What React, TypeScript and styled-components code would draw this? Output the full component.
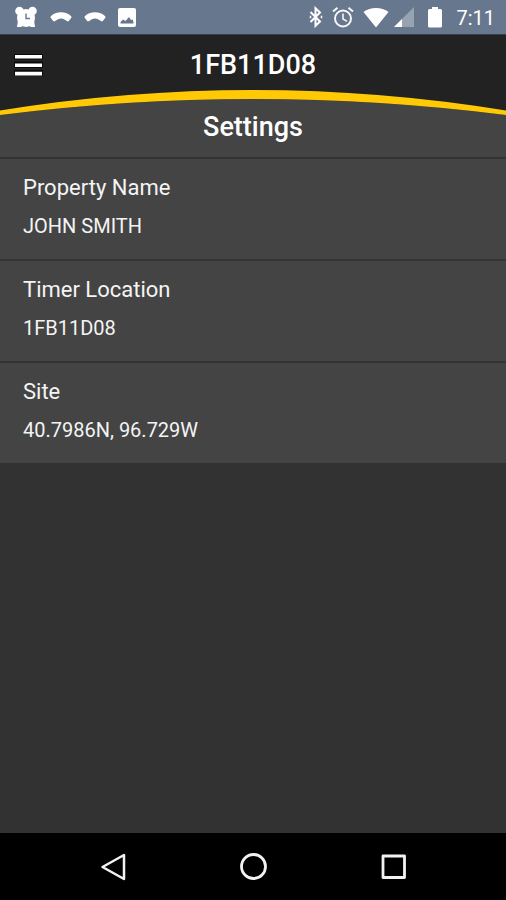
import React from "react";
import styled, { createGlobalStyle } from "styled-components";

const GlobalStyle = createGlobalStyle`
  * { box-sizing: border-box; }
  html, body { margin: 0; background: #323232; }
  body { font-family: Roboto, "Noto Sans", sans-serif; color: #fff; }
`;

const Screen = styled.div`
  display: flex;
  flex-direction: column;
  min-height: 100vh;
  background: #323232;
`;

const StatusBar = styled.div`
  display: flex;
  justify-content: space-between;
  align-items: center;
  height: 35px;
  padding: 0 11px 0 14px;
  background: #67778e;
  border-bottom: 1px solid #37404c;
`;

const StatusGroup = styled.div<{ $gap: number }>`
  display: flex;
  align-items: center;
  gap: ${(p) => p.$gap}px;
`;

const Clock = styled.time`
  padding-top: 2px;
  font-size: 20px;
  line-height: 24px;
  font-weight: 400;
  color: #fff;
`;

const Icon = styled.svg`
  display: block;
  flex: none;
`;

const Header = styled.header`
  background: #222;
`;

const TopBar = styled.div`
  display: grid;
  grid-template-columns: 56px 1fr 56px;
  align-items: center;
  height: 55px;
  padding-bottom: 2px;
`;

const MenuButton = styled.button`
  display: flex;
  align-items: center;
  height: 48px;
  padding: 6px 0 0 14px;
  border: 0;
  background: none;
  color: #fff;
`;

const TimerName = styled.h1`
  margin: 0;
  padding-top: 6px;
  font-size: 27px;
  line-height: 32px;
  font-weight: 500;
  text-align: center;
`;

const Arc = styled.svg`
  display: block;
  width: 100%;
  height: 26px;
`;

const SectionTitle = styled.h2`
  margin: 0;
  padding-bottom: 19px;
  background: #444;
  font-size: 27px;
  line-height: 22px;
  font-weight: 500;
  text-align: center;
`;

const SettingsList = styled.dl`
  margin: 0;
`;

const SettingRow = styled.div`
  padding: 15px 23px 20px;
  background: #444;
  border-top: 2px solid #333;
`;

const Label = styled.dt`
  font-size: 22px;
  line-height: 27px;
  color: #f4f4f4;
`;

const Value = styled.dd`
  margin: 12px 0 0;
  font-size: 20px;
  line-height: 26px;
  color: #f4f4f4;
`;

const NavBar = styled.nav`
  display: flex;
  justify-content: center;
  align-items: center;
  gap: 100px;
  height: 67px;
  margin-top: auto;
  background: #000;
`;

const NavButton = styled.button`
  display: flex;
  justify-content: center;
  align-items: center;
  width: 40px;
  height: 40px;
  padding: 0;
  border: 0;
  background: none;
  color: #f2f2f2;
`;

const settings = [
  { label: "Property Name", value: "JOHN SMITH" },
  { label: "Timer Location", value: "1FB11D08" },
  { label: "Site", value: "40.7986N, 96.729W" },
];

const AlarmFilled = () => (
  <Icon width="24" height="22" viewBox="0 0 24 22" fill="#fff" aria-hidden="true">
    <circle cx="5.500" cy="5" r="4.300" />
    <circle cx="18.500" cy="5" r="4.300" />
    <circle cx="12" cy="12" r="9" />
    <path d="M4 14L3 21h4l3-2zM20 14l1 7h-4l-3-2z" />
    <path d="M12 7.500v5h4" fill="none" stroke="#67778e" strokeWidth="1.400" />
  </Icon>
);

const MissedCall = () => (
  <Icon width="22" height="12" viewBox="0 0 22 12" fill="#fff" aria-hidden="true">
    <path d="M11 1.200C7 1.200 3.200 2.800.800 5.200Q.200 6 .700 6.700L3.200 10Q3.800 10.700 4.700 10.300L8 8.200Q11 6.900 14 8.200L17.300 10.300Q18.200 10.700 18.800 10L21.300 6.700Q21.800 6 21.200 5.200C18.800 2.800 15 1.200 11 1.200Z" />
  </Icon>
);

const Picture = () => (
  <Icon width="18" height="20" viewBox="0 0 18 20" aria-hidden="true">
    <rect width="18" height="19" y="1" rx="2" fill="#fff" />
    <path d="M2.500 16.500v-1.500l2.500-2.500 2.500 1.500 3.500-4 2 3 1.500-.500 1 2.500v1.500z" fill="#67778e" />
  </Icon>
);

const Bluetooth = () => (
  <Icon width="14" height="22" viewBox="0 0 14 22" fill="none" stroke="#fff" strokeWidth="2" aria-hidden="true">
    <path d="M1.500 6l9.500 9.500-4.500 4.300V2.200L11 6.500 1.500 16" />
    <path d="M12.500 9.800v2.400M1.500 9.800v2.400" strokeWidth="1.500" />
  </Icon>
);

const AlarmOutline = () => (
  <Icon width="22" height="22" viewBox="0 0 22 22" fill="none" stroke="#f4f6f8" strokeWidth="2" aria-hidden="true">
    <circle cx="11" cy="12.500" r="8" />
    <path d="M1 5.500L5.500 1.700M21 5.500l-4.500-3.800" />
    <path d="M11 7.500v5.500l4 2.400" strokeWidth="1.600" />
  </Icon>
);

const Wifi = () => (
  <Icon width="26" height="21" viewBox="0 0 26 21" fill="#fff" aria-hidden="true">
    <path d="M13 20.500L.500 5C4 2.300 8.300 1 13 1s9 1.300 12.500 4z" />
  </Icon>
);

const Signal = () => (
  <Icon width="20" height="20" viewBox="0 0 20 20" aria-hidden="true">
    <path d="M0 20L20 0v20z" fill="#98a3b2" />
    <path d="M0 20l8-8v8z" fill="#fff" />
  </Icon>
);

const Battery = () => (
  <Icon width="14" height="22" viewBox="0 0 14 22" fill="#fff" aria-hidden="true">
    <path d="M4 1h6v2H12.500q1.500 0 1.500 1.500v15.500q0 1.500-1.500 1.500H1.500q-1.500 0-1.500-1.500V4.500q0-1.500 1.500-1.500h2.500z" />
  </Icon>
);

export default function App() {
  return (
    <>
      <GlobalStyle />
      <Screen>
        <StatusBar>
          <StatusGroup $gap={12}>
            <AlarmFilled />
            <MissedCall />
            <MissedCall />
            <Picture />
          </StatusGroup>
          <StatusGroup $gap={14}>
            <StatusGroup $gap={9}>
              <Bluetooth />
              <AlarmOutline />
              <StatusGroup $gap={5}>
                <Wifi />
                <Signal />
              </StatusGroup>
            </StatusGroup>
            <Battery />
            <Clock>7:11</Clock>
          </StatusGroup>
        </StatusBar>
        <Header>
          <TopBar>
            <MenuButton type="button" aria-label="Open menu">
              <Icon width="30" height="24" viewBox="0 0 30 24" aria-hidden="true">
                <path d="M0 1h29v22H0z" fill="#0a0a0a" />
                <path d="M0 6.500h29v2H0zM0 15h29v2H0z" fill="#222" />
                <path d="M1 2h27v3.600H1zM1 10.400h27v3.600H1zM1 18.800h27v3.600H1z" fill="#fff" />
              </Icon>
            </MenuButton>
            <TimerName>1FB11D08</TimerName>
          </TopBar>
          <Arc viewBox="0 0 506 26" preserveAspectRatio="none" aria-hidden="true">
            <path d="M0 25Q253-7 506 25V26H0Z" fill="#444" />
            <path d="M0 20.500Q253-20.500 506 20.500V25Q253-7 0 25Z" fill="#ffca05" />
          </Arc>
        </Header>
        <main>
          <SectionTitle>Settings</SectionTitle>
          <SettingsList>
            {settings.map((s) => (
              <SettingRow key={s.label}>
                <Label>{s.label}</Label>
                <Value>{s.value}</Value>
              </SettingRow>
            ))}
          </SettingsList>
        </main>
        <NavBar aria-label="System navigation">
          <NavButton type="button" aria-label="Back">
            <Icon width="28" height="28" viewBox="0 0 28 28" fill="none" stroke="currentColor" strokeWidth="2.500" strokeLinejoin="round" aria-hidden="true">
              <path d="M25 2v24L3.500 14z" />
            </Icon>
          </NavButton>
          <NavButton type="button" aria-label="Home">
            <Icon width="28" height="28" viewBox="0 0 28 28" fill="none" stroke="currentColor" strokeWidth="2.800" aria-hidden="true">
              <circle cx="14.500" cy="13.500" r="12" />
            </Icon>
          </NavButton>
          <NavButton type="button" aria-label="Recent apps">
            <Icon width="28" height="28" viewBox="0 0 28 28" fill="none" stroke="currentColor" strokeWidth="2.800" strokeLinejoin="round" aria-hidden="true">
              <rect x="4" y="3" width="21.500" height="21.500" />
            </Icon>
          </NavButton>
        </NavBar>
      </Screen>
    </>
  );
}
